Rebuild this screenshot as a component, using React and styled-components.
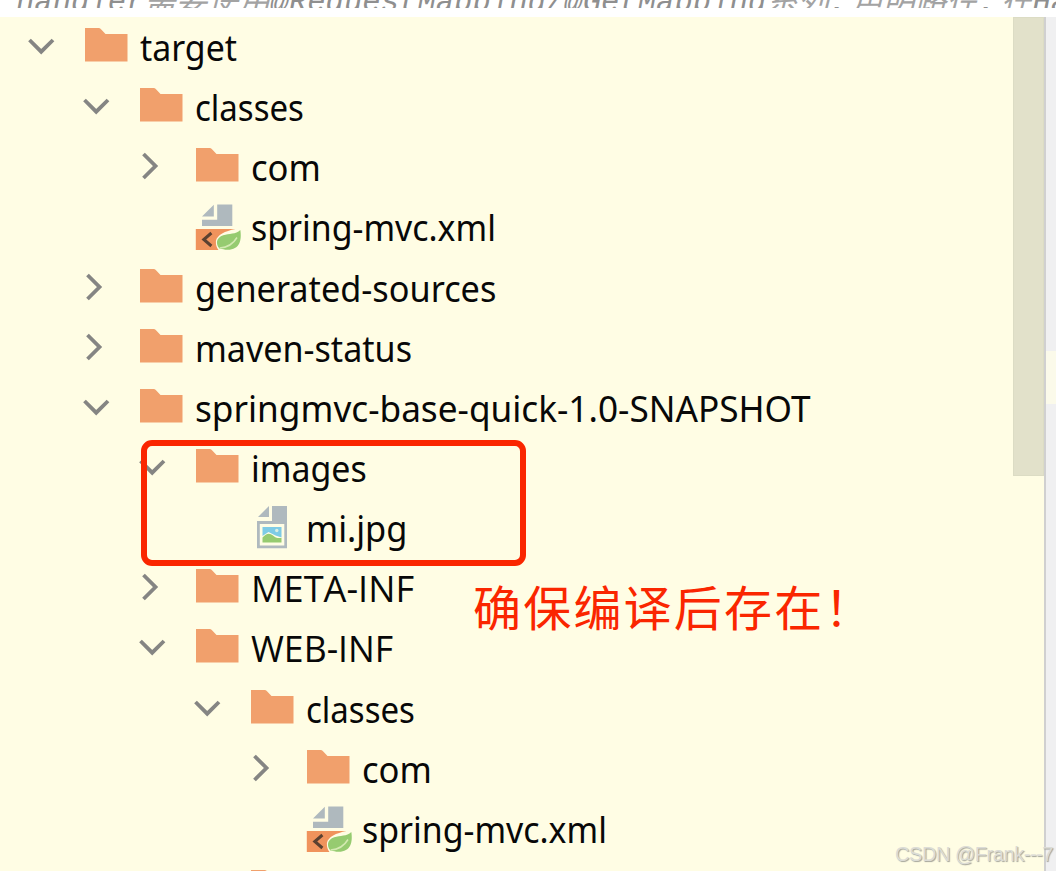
import React from "react";
import styled, { createGlobalStyle } from "styled-components";

const COLORS = {
  panel: "#fffde4",
  text: "#080808",
  chevron: "#858583",
  folder: "#f1a06c",
  gray: "#afb9be",
  red: "#fa2600",
};

const INDENT = 55.4;

// `stretch` narrows the label horizontally, since the UI font
// is a bit more condensed than Noto Sans.
const NODES = [
  { name: "target", depth: 0, kind: "folder", open: true, stretch: 0.915 },
  { name: "classes", depth: 1, kind: "folder", open: true, stretch: 0.892 },
  { name: "com", depth: 2, kind: "folder", open: false, stretch: 0.935 },
  { name: "spring-mvc.xml", depth: 2, kind: "spring", stretch: 0.915 },
  { name: "generated-sources", depth: 1, kind: "folder", open: false, stretch: 0.926 },
  { name: "maven-status", depth: 1, kind: "folder", open: false, stretch: 0.921 },
  { name: "springmvc-base-quick-1.0-SNAPSHOT", depth: 1, kind: "folder", open: true, stretch: 0.951 },
  { name: "images", depth: 2, kind: "folder", open: true, stretch: 0.916 },
  { name: "mi.jpg", depth: 3, kind: "image", stretch: 0.929 },
  { name: "META-INF", depth: 2, kind: "folder", open: false, stretch: 0.978, caps: true },
  { name: "WEB-INF", depth: 2, kind: "folder", open: true, stretch: 0.962, caps: true },
  { name: "classes", depth: 3, kind: "folder", open: true, stretch: 0.892 },
  { name: "com", depth: 4, kind: "folder", open: false, stretch: 0.935 },
  { name: "spring-mvc.xml", depth: 4, kind: "spring", stretch: 0.915 },
  { name: "", depth: 3, kind: "folder", stretch: 1 },
];

const Chevron = ({ open }) => (
  <svg width="61" height="60" viewBox="0 0 61 60" fill="none">
    <path
      d={open ? "M6.5 23 L18.2 34.7 L30 23" : "M9.5 17 L21.5 29 L9.5 41"}
      stroke={COLORS.chevron}
      strokeWidth="3.8"
    />
  </svg>
);

const FolderIcon = () => (
  <svg width="56" height="60" viewBox="0 0 56 60">
    <path d="M1 11 H14.5 Q16 11 17 12.2 L21.5 17 H43.5 V44.6 H1 Z" fill={COLORS.folder} />
  </svg>
);

const SpringIcon = () => (
  <svg width="56" height="60" viewBox="0 0 56 60">
    <path d="M7 19.5 L18.8 7.7 V19.5 Z" fill={COLORS.gray} />
    <path d="M22.2 7.5 H37.3 V29 H7 V22.8 H22.2 Z" fill={COLORS.gray} />
    <path d="M0.8 32 H40.5 C30 34 22 38 20.9 44 Q20.7 50 23.5 53 H0.8 Z" fill="#f0935c" />
    <path d="M16.4 36 L8.8 42.5 L16.4 49" fill="none" stroke="#5b4131" strokeWidth="3" />
    <path
      d="M45.3 33 C47 43 44.7 52.8 32.7 52.8 C28.7 52.8 27 51.4 24.7 51.8 C20.2 47 21.2 40.5 28.2 38.2 C34.2 36.4 40.7 37.5 45.3 33 Z"
      fill="#96cb70"
    />
    <path d="M24.7 51 C32 50.5 38.5 46.5 42 40.5" fill="none" stroke="#d4eab2" strokeWidth="1.5" />
  </svg>
);

const ImageIcon = () => (
  <svg width="56" height="60" viewBox="0 0 56 60">
    <path d="M8 19 L19 8 V19 Z" fill={COLORS.gray} />
    <path
      d="M22 8 H37 V50.3 H7 V23 H22 Z M9.8 26 V47.6 H34.3 V26 Z"
      fill={COLORS.gray}
      fillRule="evenodd"
    />
    <path d="M12.5 29 H31.5 V39.5 L25.5 37.5 L18.5 34 L12.5 38 Z" fill="#7ecbe5" />
    <circle cx="26.8" cy="32.5" r="1.7" fill="#d9eee2" />
    <path d="M12.5 39.5 Q18 33 23 37.5 Q25.5 40.5 31.5 40 V44.4 H12.5 Z" fill="#96cb70" />
  </svg>
);

const ICONS = {
  folder: FolderIcon,
  spring: SpringIcon,
  image: ImageIcon,
};

const TreeNode = ({ name, depth, kind, open, stretch, caps }) => {
  const Icon = ICONS[kind];

  return (
    <Row $depth={depth}>
      <ChevronSlot>
        {open !== undefined && <Chevron open={open} />}
      </ChevronSlot>
      <IconSlot>
        <Icon />
      </IconSlot>
      <Label $stretch={stretch} $caps={caps}>
        {name}
      </Label>
    </Row>
  );
};

const App = () => {
  return (
    <Page>
      <GlobalStyle />
      <CodeLine>
        handler<Han>需要使用</Han>@RequestMapping/@GetMapping<Han>系列</Han>
        <Comma>,</Comma>
        <Han>声明路径</Han>
        <Comma>,</Comma>
        <Han>在</Han>Ha
      </CodeLine>
      <Body>
        <Tree>
          {NODES.map((node, index) => (
            <TreeNode key={index} {...node} />
          ))}
        </Tree>
        <Track>
          <Thumb />
        </Track>
        <Gutter>
          <GutterMark />
        </Gutter>
      </Body>
      <Highlight />
      <Note>确保编译后存在！</Note>
      <Watermark>CSDN @Frank---7</Watermark>
    </Page>
  );
};

const GlobalStyle = createGlobalStyle`
  body {
    margin: 0;
    overflow: hidden;
  }
`;

const Page = styled.main`
  position: relative;
  display: flex;
  flex-direction: column;
  width: 1056px;
  height: 871px;
  overflow: hidden;
  background: white;
`;

const CodeLine = styled.div`
  flex-shrink: 0;
  height: 8px;
  margin-bottom: 9px;
  padding-left: 16px;
  overflow: hidden;
  font-family: "Liberation Mono", "Noto Sans CJK SC", monospace;
  font-size: 30.6px;
  font-style: italic;
  line-height: 6px;
  white-space: nowrap;
  color: #8f8f8f;
`;

const Han = styled.span`
  font-size: 31.5px;
  line-height: 0;
  color: #a3a3a3;
`;

const Comma = styled.span`
  letter-spacing: 4.5px;
`;

const Body = styled.div`
  display: flex;
  height: 854px;
  background: ${COLORS.panel};
`;

const Tree = styled.div`
  flex: 1;
  min-width: 0;
  height: 100%;
  overflow: hidden;
`;

const Row = styled.div`
  display: flex;
  height: 60.15px;
  padding-left: ${(props) => 23 + props.$depth * INDENT}px;
`;

const ChevronSlot = styled.div`
  width: 61px;
  flex-shrink: 0;
`;

const IconSlot = styled.div`
  width: 56px;
  flex-shrink: 0;
`;

const Label = styled.span`
  font-family: ${(props) =>
    props.$caps ? '"Open Sans", sans-serif' : '"Noto Sans", sans-serif'};
  font-size: 37px;
  line-height: 60px;
  transform: scaleX(${(props) => props.$stretch});
  transform-origin: left;
  white-space: nowrap;
  color: ${COLORS.text};
`;

const Track = styled.div`
  width: 31px;
`;

const Thumb = styled.div`
  box-sizing: border-box;
  height: 459px;
  border: 1px solid #dcdcc4;
  background: #e2e1ca;
`;

const Gutter = styled.div`
  width: 10px;
  border-left: 2px solid #d0d0d0;
  background: #f0f0f1;
`;

const GutterMark = styled.div`
  height: 53px;
  margin-top: 334px;
  background: #fbfaea;
`;

const Highlight = styled.div`
  position: absolute;
  left: 141px;
  top: 440px;
  box-sizing: border-box;
  width: 385px;
  height: 126px;
  border: 6px solid ${COLORS.red};
  border-radius: 11px;
`;

const Note = styled.div`
  position: absolute;
  left: 473px;
  top: 569px;
  font-family: "Noto Sans CJK SC", sans-serif;
  font-size: 48px;
  line-height: 72px;
  letter-spacing: 2.2px;
  white-space: nowrap;
  color: ${COLORS.red};
`;

const Watermark = styled.div`
  position: absolute;
  left: 895px;
  top: 843px;
  font-family: "Liberation Sans", sans-serif;
  font-size: 20px;
  line-height: 23px;
  letter-spacing: -0.45px;
  white-space: nowrap;
  color: #dcdcd6;
  text-shadow: 1px 1px 1px #a3a39a;
`;

export default App;
